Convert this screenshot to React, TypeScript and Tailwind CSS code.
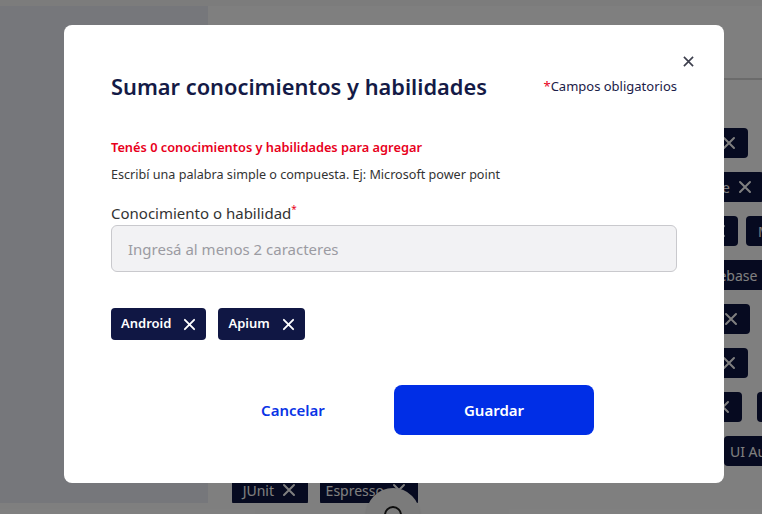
import React from "react";

const font = { fontFamily: '"Noto Sans", Roboto, sans-serif' };

function XIcon({ size = 14 }: { size?: number }) {
  return (
    <svg width={size} height={size} viewBox="0 0 14 14" fill="none" stroke="currentColor" strokeWidth="2" strokeLinecap="round" className="shrink-0">
      <path d="M2 2l10 10M12 2L2 12" />
    </svg>
  );
}

function Chip({ label, className = "" }: { label: string; className?: string }) {
  return (
    <div className={`flex items-center justify-end gap-2 h-[30px] px-3 bg-[#0c1440] rounded-[4px] text-white text-[14px] shrink-0 overflow-hidden whitespace-nowrap ${className}`}>
      {label}
      <XIcon size={14} />
    </div>
  );
}

export default function App() {
  return (
    <div className="relative w-[762px] h-[514px] overflow-hidden bg-white" style={font}>
      {/* page behind the modal */}
      <div className="flex flex-col h-full">
        <div className="h-[6px] bg-[#f8f8f8] shrink-0" />
        <div className="flex flex-1 min-h-0">
          <div className="w-[208px] bg-[#eceef6] shrink-0" />
          <div className="flex-1 flex flex-col min-w-0">
            <div className="h-[74px] border-b-2 border-[#d6d6d6] shrink-0" />
            <div className="flex flex-col gap-[14px] pt-[48px]">
              <div className="flex gap-2 ml-[420px]"><Chip label="Kotlin" className="w-[120px]" /></div>
              <div className="flex gap-2 ml-[414px]"><Chip label="Room Database" className="w-[142px]" /></div>
              <div className="flex gap-2 ml-[410px]"><Chip label="MVVM" className="w-[120px]" /><Chip label="MVP" className="w-[70px] justify-start" /></div>
              <div className="flex gap-2 ml-[482px]"><Chip label="Firebase" className="w-[120px] justify-start" /></div>
              <div className="flex gap-2 ml-[420px]"><Chip label="Retrofit" className="w-[122px]" /></div>
              <div className="flex gap-2 ml-[420px]"><Chip label="Dagger" className="w-[120px]" /></div>
              <div className="flex gap-[15px] ml-[414px]"><Chip label="Glide" className="w-[120px]" /><Chip label="Git" className="w-[60px] justify-start" /></div>
              <div className="flex gap-2 ml-[516px]"><Chip label="UI Automator" className="justify-start pl-[6px]" /></div>
            </div>
            <div className="flex gap-3 pl-[24px] mt-auto mb-[9px]">
              <Chip label="JUnit" className="w-[76px] pl-[8px]" />
              <Chip label="Espresso" className="w-[98px]" />
            </div>
          </div>
        </div>
      </div>
      <div className="absolute left-0 right-0 bottom-0 h-[11px] bg-[#ffffff]" />
      <div className="absolute left-[366px] top-[488px] w-[54px] h-[54px] rounded-full bg-[#f6f6f6] shadow flex justify-center pt-[18px]">
        <div className="w-[18px] h-[18px] rounded-full border-2 border-[#1b1b1b]" />
      </div>

      {/* overlay */}
      <div className="absolute inset-0 bg-black/50" />

      {/* modal */}
      <div className="absolute left-[64px] top-[25px] w-[660px] h-[458px] bg-white rounded-[8px] px-[47px] pt-[28px]">
        <div className="flex justify-end -mr-[19px]">
          <button className="text-[#3d3f4d] w-[16px] h-[16px] flex items-center justify-center">
            <svg width="11" height="11" viewBox="0 0 12 12" fill="none" stroke="currentColor" strokeWidth="1.8">
              <path d="M1 1l10 10M11 1L1 11" />
            </svg>
          </button>
        </div>
        <div className="flex items-center justify-between mt-[3px]">
          <h2 className="text-[21.8px] font-semibold text-[#141a46] leading-[30px]">Sumar conocimientos y habilidades</h2>
          <span className="text-[13px] text-[#1b2048]"><span className="text-[#e8001c]">*</span>Campos obligatorios</span>
        </div>
        <p className="mt-[36px] text-[12.8px] font-semibold text-[#e8001c] leading-[18px]">Tenés 0 conocimientos y habilidades para agregar</p>
        <p className="mt-[10px] text-[12.6px] text-[#333333] leading-[18px]">Escribí una palabra simple o compuesta. Ej: Microsoft power point</p>
        <label className="block mt-[19px] text-[15px] text-[#333333] leading-[20px]">
          Conocimiento o habilidad<span className="relative -top-[6px] text-[#e8001c] text-[10px]">*</span>
        </label>
        <input
          className="block w-full h-[47px] bg-[#f2f2f4] border border-[#c9c9cd] rounded-[6px] px-[16px] text-[15px] placeholder:text-[#9b9ba2] outline-none"
          placeholder="Ingresá al menos 2 caracteres"
        />
        <div className="flex gap-[12px] mt-[36px]">
          <div className="flex items-center gap-[12px] h-[32px] px-[10px] bg-[#101744] rounded-[4px] text-white text-[13px] font-semibold">
            Android <XIcon size={13} />
          </div>
          <div className="flex items-center gap-[12px] h-[32px] px-[10px] bg-[#101744] rounded-[4px] text-white text-[13px] font-semibold">
            Apium <XIcon size={13} />
          </div>
        </div>
        <div className="flex items-center mt-[45px] pl-[102px] gap-[21px]">
          <button className="w-[160px] text-[15px] font-semibold text-[#0a34e6]">Cancelar</button>
          <button className="w-[200px] h-[50px] rounded-[8px] bg-[#002ee6] text-white text-[15px] font-semibold">Guardar</button>
        </div>
      </div>
    </div>
  );
}
